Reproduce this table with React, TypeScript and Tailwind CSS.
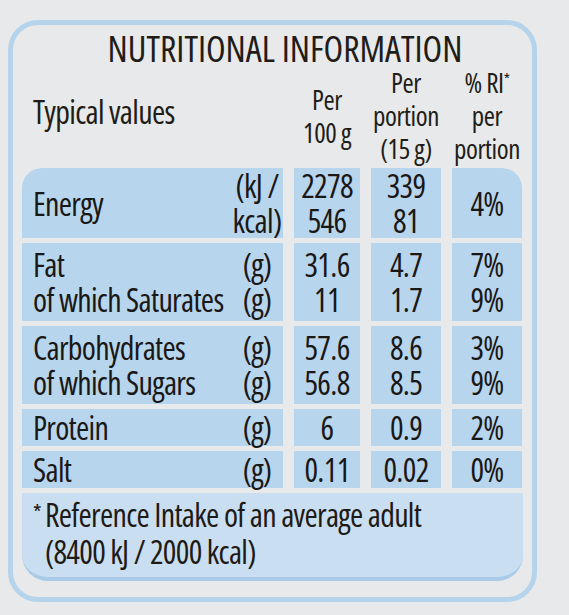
type Row = {
  labels: string[];
  units: string[];
  a: string[];
  b: string[];
  c: string[];
  pad: string;
  first?: boolean;
};

const rows: Row[] = [
  { labels: ["Energy"], units: ["(kJ /", "kcal)"], a: ["2278", "546"], b: ["339", "81"], c: ["4%"], pad: "py-0", first: true },
  { labels: ["Fat", "of which Saturates"], units: ["(g)", "(g)"], a: ["31.6", "11"], b: ["4.7", "1.7"], c: ["7%", "9%"], pad: "py-[4px]" },
  { labels: ["Carbohydrates", "of which Sugars"], units: ["(g)", "(g)"], a: ["57.6", "56.8"], b: ["8.6", "8.5"], c: ["3%", "9%"], pad: "py-[4px]" },
  { labels: ["Protein"], units: ["(g)"], a: ["6"], b: ["0.9"], c: ["2%"], pad: "py-[1px]" },
  { labels: ["Salt"], units: ["(g)"], a: ["0.11"], b: ["0.02"], c: ["0%"], pad: "py-[1px]" },
];

function Lines({ items }: { items: string[] }) {
  return (
    <div className="flex flex-col">
      {items.map((t, i) => (
        <span key={i} className="block whitespace-nowrap">
          {t}
        </span>
      ))}
    </div>
  );
}

export default function App() {
  return (
    <div className="w-[569px] h-[615px] overflow-hidden bg-[#e7e9ea] pt-[20px] pl-[8px] font-['Open_Sans',sans-serif] font-stretch-condensed font-medium text-[#1a1816]">
      <div className="w-[529px] h-[582px] rounded-[30px] border-[5px] border-[#b5d3eb] px-[9px]">
        {/* Title */}
        <div className="mt-[7px] pl-[25px] text-center text-[36px] leading-[34px] tracking-[0px] text-[#221c17] whitespace-nowrap">
          NUTRITIONAL INFORMATION
        </div>

        {/* Header row */}
        <div className="grid grid-cols-[261px_66px_70px_70px] gap-x-[11px] text-[27px] leading-[33px] tracking-[-0.4px] mb-[3px] text-[#221c17]">
          <div className="self-center pl-[11px] mb-[8px] text-[32px] tracking-[-0.7px] whitespace-nowrap">Typical values</div>
          <div className="self-center text-center">
            <div>Per</div>
            <div className="whitespace-nowrap">100 g</div>
          </div>
          <div className="text-center">
            <div>Per</div>
            <div>portion</div>
            <div className="whitespace-nowrap">(15 g)</div>
          </div>
          <div className="text-center">
            <div className="whitespace-nowrap">
              % RI<span className="relative -top-[8px] text-[16px] leading-none">*</span>
            </div>
            <div>per</div>
            <div>portion</div>
          </div>
        </div>

        {/* Table body */}
        <div className="flex flex-col gap-y-[5px] text-[32px] leading-[35px] tracking-[-0.7px]">
          {rows.map((r, i) => (
            <div key={i} className="grid grid-cols-[261px_66px_70px_70px] gap-x-[11px]">
              <div className={`flex bg-[#b8d5ee] ${r.pad} ${r.first ? "rounded-tl-[20px]" : ""}`}>
                <div className="flex-1 self-center pl-[11px]">
                  <Lines items={r.labels} />
                </div>
                <div className="w-[52px] self-center text-center">
                  <Lines items={r.units} />
                </div>
              </div>
              <div className={`flex items-center justify-center text-center bg-[#b8d5ee] ${r.pad}`}>
                <Lines items={r.a} />
              </div>
              <div className={`flex items-center justify-center text-center bg-[#b8d5ee] ${r.pad}`}>
                <Lines items={r.b} />
              </div>
              <div className={`flex items-center justify-center text-center bg-[#b8d5ee] ${r.pad} ${r.first ? "rounded-tr-[20px]" : ""}`}>
                <Lines items={r.c} />
              </div>
            </div>
          ))}

          {/* Footnote */}
          <div className="h-[88px] rounded-b-[26px] bg-[#c9dff1] border-b-[4px] border-[#a9cbe8] pl-[11px] pt-[3px] flex text-[32px] leading-[37px] tracking-[-0.7px] text-[#1f1a16]">
            <span className="text-[22px] leading-[30px] mr-[4px]">*</span>
            <div>
              <div className="whitespace-nowrap">Reference Intake of an average adult</div>
              <div className="whitespace-nowrap">(8400 kJ / 2000 kcal)</div>
            </div>
          </div>
        </div>
      </div>
    </div>
  );
}
